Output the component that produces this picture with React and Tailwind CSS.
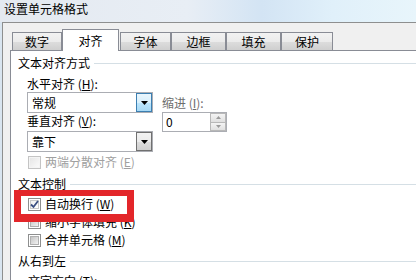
import React from "react";

function Arrow({ color = "#000" }) {
  return (
    <svg width="7" height="4" viewBox="0 0 7 4">
      <polygon points="0,0 7,0 3.5,4" fill={color} />
    </svg>
  );
}

function Combo({ children, active, className = "" }) {
  return (
    <div className={"h-[21px] border border-[#abadb3] bg-white flex items-center " + className}>
      <span className="pl-[4px] flex-1">{children}</span>
      {active ? (
        <div className="w-[16px] h-[19px] border border-[#3c7fb1] bg-[linear-gradient(180deg,#eaf6fd_0%,#d9f0fc_50%,#bee6fd_51%,#a7d9f5_100%)] flex items-center justify-center">
          <Arrow />
        </div>
      ) : (
        <div className="w-[16px] h-[19px] border border-[#707070] bg-[linear-gradient(180deg,#f2f2f2_0%,#ebebeb_50%,#dddddd_51%,#cfcfcf_100%)] flex items-center justify-center">
          <Arrow />
        </div>
      )}
    </div>
  );
}

function Check({ checked, disabled }) {
  return (
    <span
      className={
        "w-[13px] h-[13px] border flex items-center justify-center shrink-0 " +
        (disabled ? "border-[#c4c4c4] bg-[#f4f4f4]" : "border-[#8e8f8f] bg-white")
      }
    >
      <span
        className={
          "w-[9px] h-[9px] flex items-center justify-center " +
          (disabled
            ? "bg-[linear-gradient(135deg,#e6e6e6,#fafafa)]"
            : checked
            ? "bg-[linear-gradient(135deg,#f0f0f0,#ffffff)] border border-[#c9c9c9]"
            : "bg-[linear-gradient(135deg,#c4c4c4,#f2f2f2)] border border-[#b0b0b0]")
        }
      >
        {checked && (
          <svg width="9" height="9" viewBox="0 0 9 9" className="shrink-0">
            <path d="M1 4.5 L3.5 7 L8 1" stroke="#3b4f82" strokeWidth="1.8" fill="none" />
          </svg>
        )}
      </span>
    </span>
  );
}

function CheckRow({ children, checked, disabled, className = "" }) {
  return (
    <div className={"h-[14px] flex items-center gap-[4px] pl-[10px] " + className}>
      <Check checked={checked} disabled={disabled} />
      <span className={disabled ? "text-[#a0a0a0]" : ""}>{children}</span>
    </div>
  );
}

function GroupLabel({ children, className = "" }) {
  return (
    <div className={"h-[14px] flex items-center " + className}>
      <span>{children}</span>
      <span className="ml-[4px] flex-1 h-px bg-[#d5dfe5]" />
    </div>
  );
}

function Tab({ children, w, selected, className = "" }) {
  if (selected) {
    return (
      <div
        className={
          "h-[22px] -mb-px relative z-10 border-x border-t border-[#898c95] bg-white flex items-start justify-center pt-[4px] " +
          className
        }
        style={{ width: w }}
      >
        {children}
      </div>
    );
  }
  return (
    <div
      className={
        "h-[18px] border-x border-t border-[#898c95] bg-[linear-gradient(180deg,#f2f2f2_0%,#ebebeb_50%,#dddddd_51%,#cfcfcf_100%)] flex items-center justify-center " +
        className
      }
      style={{ width: w }}
    >
      {children}
    </div>
  );
}

const U = ({ children }) => <span className="underline underline-offset-[1px]">{children}</span>;

export default function App() {
  return (
    <div className="w-[416px] h-[280px] overflow-hidden relative bg-[#dbe6f1] font-['Noto_Sans_CJK_SC',sans-serif] text-[12px] leading-[14px] text-black">
      <div className="h-[22px] pl-[4px] pt-[2px] bg-[linear-gradient(90deg,#e4e9f0_0%,#e8eef5_45%,#d3e4f4_63%,#e0f0fa_80%,#e8f5fb_100%)]">
        设置单元格格式
      </div>
      <div className="flex h-[258px]">
        <div className="w-[2px] bg-[#d9e5f0]" />
        <div className="flex-1 border-l border-t border-[#8e8f8f] bg-[#f0f0f0] flex flex-col">
          <div className="h-[27px] shrink-0 flex items-end pl-[9px]">
            <Tab w={50}>数字</Tab>
            <Tab w={57} selected>对齐</Tab>
            <Tab w={51} className="ml-[1px]">字体</Tab>
            <Tab w={55}>边框</Tab>
            <Tab w={55}>填充</Tab>
            <Tab w={52}>保护</Tab>
          </div>
          <div className="ml-[7px] flex-1 min-h-0 overflow-hidden border-l border-t border-[#898c95] bg-white pl-[7px] pt-[5px]">
            <GroupLabel>文本对齐方式</GroupLabel>
            <div className="flex pl-[9px] mt-[7px]">
              <div className="w-[126px] flex flex-col">
                <div>水平对齐 (<U>H</U>):</div>
                <Combo className="mt-[1px]" active>常规</Combo>
                <div className="mt-[1px]">垂直对齐 (<U>V</U>):</div>
                <Combo className="mt-[3px]">靠下</Combo>
              </div>
              <div className="ml-[9px] mt-[19px] flex flex-col">
                <div className="text-[#6d6d6d]">缩进 (<U>I</U>):</div>
                <div className="mt-[2px] w-[65px] h-[20px] border border-[#abadb3] bg-white flex items-center">
                  <span className="pl-[3px] flex-1">0</span>
                  <div className="w-[16px] h-[18px] flex flex-col">
                    <div className="flex-1 border border-[#b8b8b8] bg-[linear-gradient(180deg,#f4f4f4,#e0e0e0)] flex items-center justify-center">
                      <svg width="5" height="3" viewBox="0 0 5 3"><polygon points="0,3 5,3 2.5,0" fill="#9a9a9a" /></svg>
                    </div>
                    <div className="flex-1 border border-t-0 border-[#b8b8b8] bg-[linear-gradient(180deg,#f4f4f4,#e0e0e0)] flex items-center justify-center">
                      <svg width="5" height="3" viewBox="0 0 5 3"><polygon points="0,0 5,0 2.5,3" fill="#9a9a9a" /></svg>
                    </div>
                  </div>
                </div>
              </div>
            </div>
            <CheckRow disabled className="mt-[3px]">两端分散对齐 (<U>E</U>)</CheckRow>
            <GroupLabel className="mt-[8px]">文本控制</GroupLabel>
            <CheckRow checked className="mt-[6px]">自动换行 (<U>W</U>)</CheckRow>
            <CheckRow className="mt-[4px]">缩小字体填充 (<U>K</U>)</CheckRow>
            <CheckRow className="mt-[4px]">合并单元格 (<U>M</U>)</CheckRow>
            <GroupLabel className="mt-[7px]">从右到左</GroupLabel>
            <div className="mt-[6px] pl-[10px]">文字方向 (<U>T</U>):</div>
          </div>
        </div>
      </div>
      <div className="absolute left-[14px] top-[190px] w-[120px] h-[32px] border-x-[7px] border-t-[6px] border-b-[8px] border-[#e3262a]" />
    </div>
  );
}
